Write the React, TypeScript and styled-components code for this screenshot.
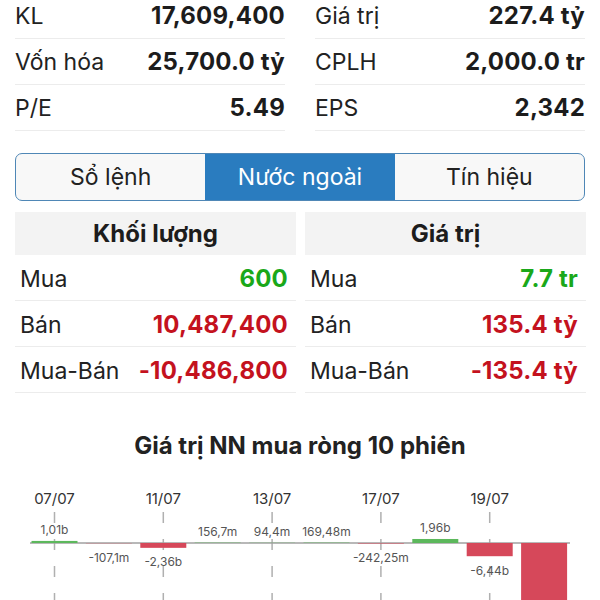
import React, { useState } from "react";
import styled, { createGlobalStyle } from "styled-components";

const GlobalStyle = createGlobalStyle`
    html, body {
        margin: 0;
        padding: 0;
        background: #ffffff;
    }
    body {
        font-family: Inter, "Liberation Sans", Arial, sans-serif;
        color: #222222;
        overflow: hidden;
    }
`;

const stats = [
    [
        { label: "KL", value: "17,609,400" },
        { label: "Vốn hóa", value: "25,700.0 tỷ" },
        { label: "P/E", value: "5.49" },
    ],
    [
        { label: "Giá trị", value: "227.4 tỷ" },
        { label: "CPLH", value: "2,000.0 tr" },
        { label: "EPS", value: "2,342" },
    ],
];

const foreign = [
    {
        title: "Khối lượng",
        rows: [
            { label: "Mua", value: "600", up: true },
            { label: "Bán", value: "10,487,400", up: false },
            { label: "Mua-Bán", value: "-10,486,800", up: false },
        ],
    },
    {
        title: "Giá trị",
        rows: [
            { label: "Mua", value: "7.7 tr", up: true },
            { label: "Bán", value: "135.4 tỷ", up: false },
            { label: "Mua-Bán", value: "-135.4 tỷ", up: false },
        ],
    },
];

const tabs = ["Sổ lệnh", "Nước ngoài", "Tín hiệu"];

// net foreign value per session, in billions
const sessions = [
    { value: 1.01, text: "1,01b", date: "07/07" },
    { value: -0.1071, text: "-107,1m" },
    { value: -2.36, text: "-2,36b", date: "11/07" },
    { value: 0.1567, text: "156,7m" },
    { value: 0.0944, text: "94,4m", date: "13/07" },
    { value: 0.16948, text: "169,48m" },
    { value: -0.24225, text: "-242,25m", date: "17/07" },
    { value: 1.96, text: "1,96b" },
    { value: -6.44, text: "-6,44b", date: "19/07" },
    { value: -40, text: "" },
];

const Page = styled.div`
    width: 600px;
    height: 600px;
    overflow: hidden;
    display: flex;
    flex-direction: column;
`;

const StatGrid = styled.div`
    margin-top: -7px;
    padding: 0 15px;
    display: grid;
    grid-template-columns: 1fr 1fr;
    column-gap: 30px;
`;

const Column = styled.div`
    display: flex;
    flex-direction: column;
`;

const Row = styled.div<{ $inset?: boolean }>`
    height: 46px;
    box-sizing: border-box;
    display: flex;
    align-items: center;
    justify-content: space-between;
    padding: ${(p) => (p.$inset ? "2px 8px 0 5px" : "0")};
    border-bottom: 1px solid #ececec;
`;

const Label = styled.span`
    font-size: 23px;
    color: #222222;
`;

const Value = styled.span<{ $tone?: "up" | "down" }>`
    font-size: 24px;
    font-weight: 700;
    letter-spacing: 0.2px;
    color: ${(p) =>
        p.$tone === "up" ? "#1aa81a" : p.$tone === "down" ? "#c4121e" : "#1c1c1c"};
`;

const TabBar = styled.div`
    margin: 22px 15px 0;
    height: 49px;
    box-sizing: border-box;
    border: 1.5px solid #4f87b6;
    border-radius: 7px;
    overflow: hidden;
    display: grid;
    grid-template-columns: repeat(3, 1fr);
    background: #f8f8f8;
`;

const Tab = styled.button<{ $active: boolean }>`
    border: none;
    margin: 0;
    padding: 0;
    font-family: inherit;
    font-size: 23px;
    color: ${(p) => (p.$active ? "#ffffff" : "#222222")};
    background: ${(p) => (p.$active ? "#2a7cbf" : "transparent")};
`;

const ForeignGrid = styled.div`
    margin-top: 11px;
    padding: 0 15px;
    display: grid;
    grid-template-columns: 281px 281px;
    column-gap: 9px;
`;

const Header = styled.div`
    height: 43px;
    background: #f3f3f3;
    display: flex;
    align-items: center;
    justify-content: center;
    font-size: 24px;
    font-weight: 700;
    color: #1c1c1c;
`;

const ChartTitle = styled.h2`
    margin: 38px 0 0;
    text-align: center;
    font-size: 24px;
    font-weight: 700;
    color: #222222;
`;

const ChartBox = styled.div`
    margin-top: 10px;
    height: 130px;
`;

const AXIS = 73;
const SCALE = 2.05;

function NetChart() {
    const first = 54.5;
    const step = 54.4;
    const width = 46;

    return (
        <svg width={600} height={130} viewBox="0 0 600 130">
            {sessions.map((s, i) =>
                s.date ? (
                    <line
                        key={`dash-${i}`}
                        x1={first + i * step}
                        x2={first + i * step}
                        y1={42}
                        y2={130}
                        stroke="#b0b0b0"
                        strokeWidth={1.5}
                        strokeDasharray="11 16"
                    />
                ) : null,
            )}
            <line x1={30} x2={570} y1={AXIS} y2={AXIS} stroke="#a0a0a0" strokeWidth={1.5} />
            {sessions.map((s, i) => {
                const cx = first + i * step;
                const h = Math.abs(s.value) * SCALE;
                const up = s.value >= 0;
                const top = up ? AXIS - h : AXIS;
                return (
                    <g key={`bar-${i}`}>
                        <rect
                            x={cx - width / 2}
                            y={top}
                            width={width}
                            height={h}
                            fill={up ? "#5cb85c" : "#d6485a"}
                        />
                        {s.text && (
                            <text
                                x={cx}
                                y={up ? top - 11 : AXIS + h + 14}
                                textAnchor="middle"
                                dominantBaseline="central"
                                fontSize={12}
                                fill="#555555"
                            >
                                {s.text}
                            </text>
                        )}
                        {s.date && (
                            <text
                                x={cx}
                                y={28}
                                textAnchor="middle"
                                dominantBaseline="central"
                                fontSize={15}
                                fill="#333333"
                            >
                                {s.date}
                            </text>
                        )}
                    </g>
                );
            })}
        </svg>
    );
}

export default function App() {
    const [activeTab, setActiveTab] = useState(1);

    return (
        <Page>
            <GlobalStyle />
            <StatGrid>
                {stats.map((col, ci) => (
                    <Column key={`stat-col-${ci}`}>
                        {col.map((item) => (
                            <Row key={item.label}>
                                <Label>{item.label}</Label>
                                <Value>{item.value}</Value>
                            </Row>
                        ))}
                    </Column>
                ))}
            </StatGrid>

            <TabBar>
                {tabs.map((t, i) => (
                    <Tab key={t} $active={i === activeTab} onClick={() => setActiveTab(i)}>
                        {t}
                    </Tab>
                ))}
            </TabBar>

            <ForeignGrid>
                {foreign.map((block) => (
                    <Column key={block.title}>
                        <Header>{block.title}</Header>
                        {block.rows.map((r) => (
                            <Row key={r.label} $inset>
                                <Label>{r.label}</Label>
                                <Value $tone={r.up ? "up" : "down"}>{r.value}</Value>
                            </Row>
                        ))}
                    </Column>
                ))}
            </ForeignGrid>

            <ChartTitle>Giá trị NN mua ròng 10 phiên</ChartTitle>
            <ChartBox>
                <NetChart />
            </ChartBox>
        </Page>
    );
}
